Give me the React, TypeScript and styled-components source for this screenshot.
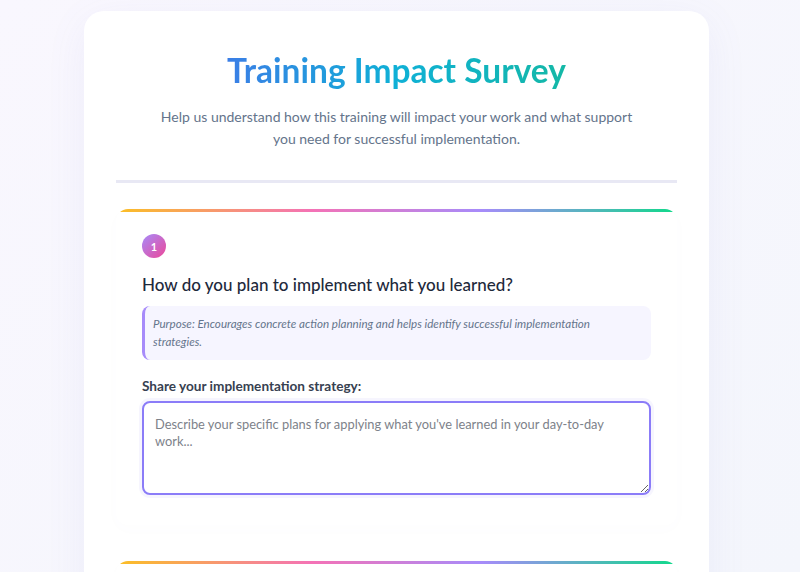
import React from 'react';
import styled, { createGlobalStyle } from 'styled-components';

const Global = createGlobalStyle`
  html, body {
    margin: 0;
    padding: 0;
  }
  body {
    font-family: Lato, "Noto Sans", sans-serif;
    background: linear-gradient(135deg, #f9f7fe 0%, #f4f6fc 100%);
    min-height: 572px;
    overflow: hidden;
  }
`;

const Page = styled.div`
  padding: 11px 91px 0 84px;
  height: 572px;
  box-sizing: border-box;
  overflow: hidden;
`;

const Container = styled.div`
  background: rgba(255, 255, 255, 0.96);
  border-radius: 20px;
  box-shadow: 0 10px 40px rgba(120, 110, 200, 0.08);
  padding: 38px 32px 40px;
  min-height: 700px;
`;

const Header = styled.header`
  text-align: center;
  padding-bottom: 30px;
  border-bottom: 3px solid #e8e8f4;
  margin-bottom: 26px;
`;

const Title = styled.h1`
  margin: 0 0 15px;
  font-size: 33.5px;
  font-weight: 700;
  line-height: 42px;
  background: linear-gradient(90deg, #3b7ee6 0%, #0fb0d6 50%, #14b8a6 100%);
  -webkit-background-clip: text;
  background-clip: text;
  color: transparent;
  display: inline-block;
`;

const Subtitle = styled.p`
  margin: 0 auto;
  max-width: 480px;
  font-size: 14px;
  line-height: 22px;
  color: #64748b;
`;

const Card = styled.section`
  position: relative;
  background: #ffffff;
  border-radius: 12px;
  padding: 25px 26px 30px;
  margin-bottom: 36px;
  overflow: hidden;
  box-shadow: 0 4px 16px rgba(100, 100, 160, 0.015);

  &::before {
    content: '';
    position: absolute;
    left: 0;
    right: 0;
    top: 0;
    height: 3px;
    background: linear-gradient(90deg, #fbbf24 0%, #f472b6 35%, #a78bfa 65%, #10d98a 100%);
  }
`;

const Badge = styled.div`
  width: 24px;
  height: 24px;
  border-radius: 50%;
  background: linear-gradient(135deg, #a78bfa 0%, #ec4899 100%);
  color: #fff;
  font-size: 11px;
  font-weight: 700;
  display: flex;
  align-items: center;
  justify-content: center;
  margin-bottom: 14px;
`;

const Question = styled.h2`
  margin: 0 0 8px;
  font-size: 17px;
  font-weight: 500;
  line-height: 26px;
  color: #1e293b;
`;

const Purpose = styled.div`
  background: #f6f5ff;
  border-left: 3px solid #a78bfa;
  border-radius: 8px;
  padding: 9px 30px 9px 8px;
  font-size: 11.6px;
  font-style: italic;
  line-height: 18px;
  color: #64748b;
  margin-bottom: 18px;
`;

const Label = styled.label`
  display: block;
  font-size: 13.6px;
  font-weight: 700;
  color: #374151;
  margin-bottom: 7px;
`;

const TextArea = styled.textarea`
  display: block;
  width: 100%;
  box-sizing: border-box;
  height: 94px;
  border: 2px solid #8b7cf8;
  border-radius: 8px;
  padding: 13px 16px 12px 11px;
  font-family: Lato, "Noto Sans", sans-serif;
  font-size: 12.85px;
  line-height: 17px;
  color: #1e293b;
  outline: none;
  box-shadow: 0 0 0 3px rgba(139, 124, 248, 0.08);

  &::placeholder {
    color: #7d828a;
  }
`;

function QuestionCard({ n, question, purpose, label, placeholder }: {
  n: number; question: string; purpose: string; label: string; placeholder: string;
}) {
  return (
    <Card>
      <Badge>{n}</Badge>
      <Question>{question}</Question>
      <Purpose>{purpose}</Purpose>
      <Label>{label}</Label>
      <TextArea placeholder={placeholder} autoFocus={n === 1} />
    </Card>
  );
}

export default function App() {
  return (
    <Page>
      <Global />
      <Container>
        <Header>
          <Title>Training Impact Survey</Title>
          <Subtitle>
            Help us understand how this training will impact your work and what support you need for successful implementation.
          </Subtitle>
        </Header>
        <QuestionCard
          n={1}
          question="How do you plan to implement what you learned?"
          purpose="Purpose: Encourages concrete action planning and helps identify successful implementation strategies."
          label="Share your implementation strategy:"
          placeholder="Describe your specific plans for applying what you've learned in your day-to-day work..."
        />
        <QuestionCard
          n={2}
          question="What support do you need to succeed?"
          purpose="Purpose: Identifies resources and support needed after training."
          label="Describe the support you need:"
          placeholder="Tell us what would help you apply this training..."
        />
      </Container>
    </Page>
  );
}
